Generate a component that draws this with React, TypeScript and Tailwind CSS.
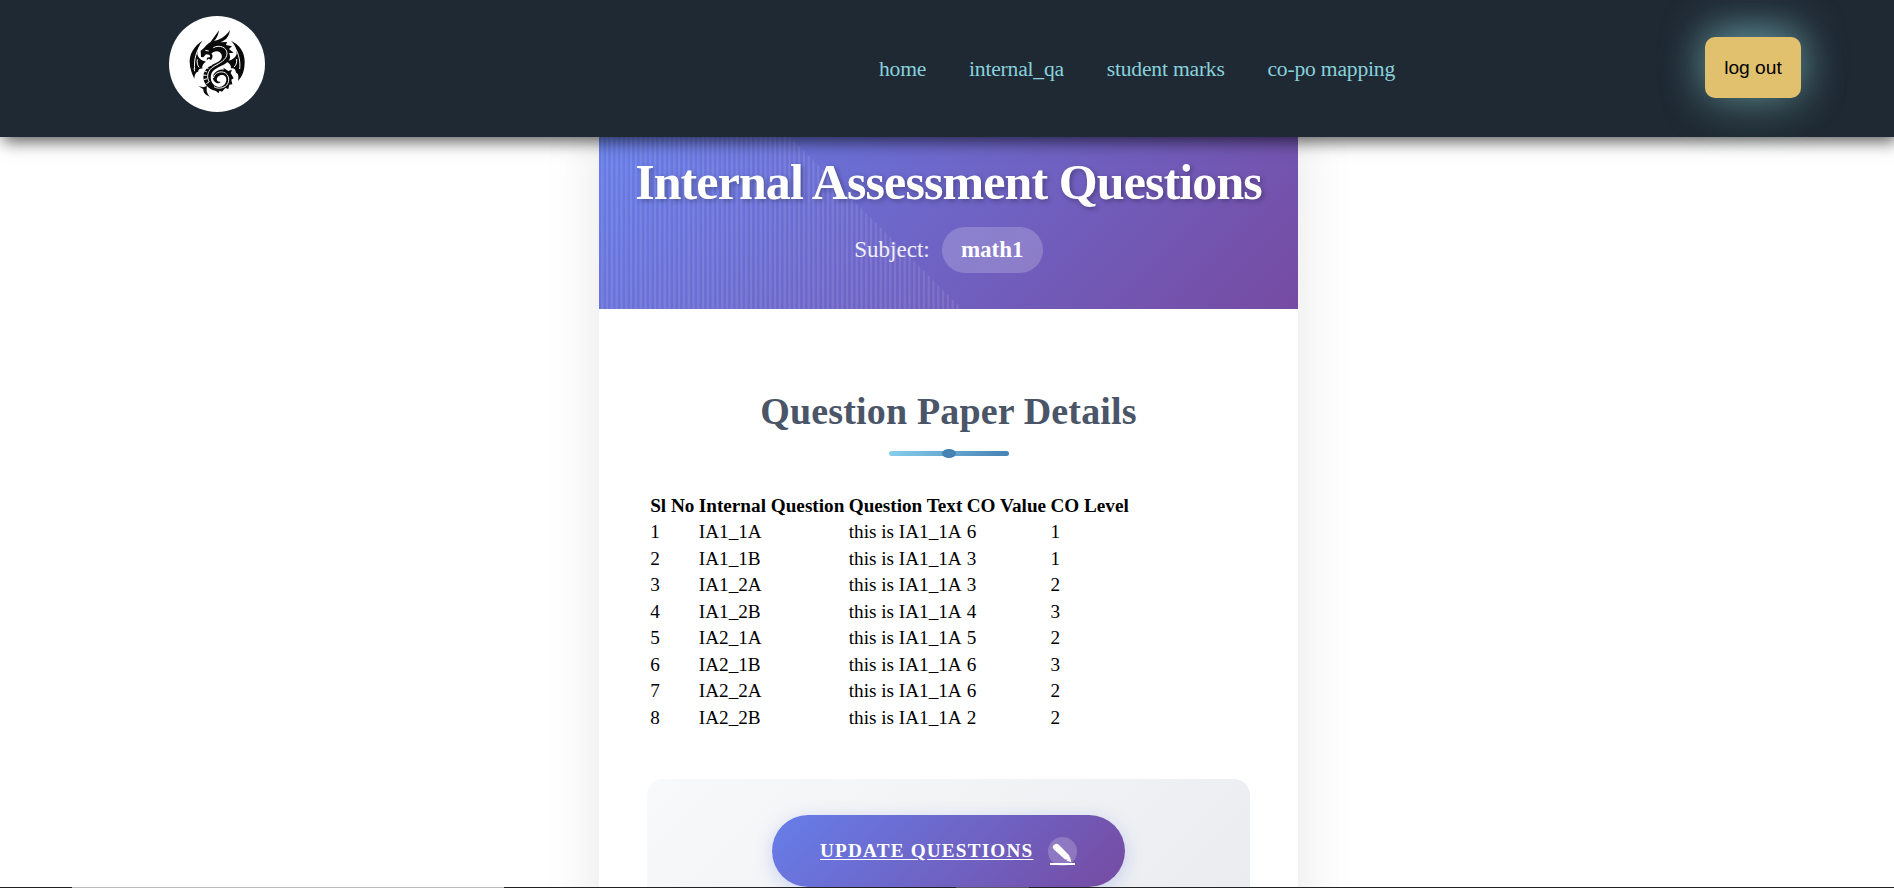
const rows = [
  ["IA1_1A", 6, 1],
  ["IA1_1B", 3, 1],
  ["IA1_2A", 3, 2],
  ["IA1_2B", 4, 3],
  ["IA2_1A", 5, 2],
  ["IA2_1B", 6, 3],
  ["IA2_2A", 6, 2],
  ["IA2_2B", 2, 2],
];

function DragonLogo() {
  return (
    <svg viewBox="0 0 420 450" className="h-[150px] w-[140px]" fill="#0a0a0a">
      <path d="M158 122C132 137 118 163 119 187C120 207 126 222 133 236C134 222 138 216 144 215C146 207 150 205 157 206C155 196 160 190 168 185C152 181 145 174 142 163C141 148 148 134 158 122Z" />
      <path d="M243 122C268 134 284 156 284 184C284 211 278 229 264 243C267 226 264 219 258 218C257 207 251 203 243 205C244 196 238 189 228 184C246 181 256 174 260 162C261 147 254 133 243 122Z" />
      <path d="M153 171L152 152C164 145 166 136 181 127L207 91C204 108 200 115 192 123C207 120 224 113 240 90C237 112 226 121 211 127L231 126L228 135L246 139L237 147L251 158L237 160C244 173 239 184 225 192C210 200 188 208 184 222C179 238 186 252 197 258C211 266 228 256 229 240C230 224 213 221 204 230C197 237 201 247 212 245C207 253 195 250 190 240C184 222 203 205 222 209L220 203L235 213L246 209L242 219L251 235L244 239L247 253L238 254L235 267L226 264L216 275L209 272L205 280L198 273C176 269 160 251 160 231C160 202 187 196 207 184C219 176 218 161 207 155C199 151 189 155 184 161C190 165 188 174 183 180L176 176L170 181L171 173L181 171L178 164L168 163L160 172Z" />
      <path d="M145 258L159 262L171 258C169 269 169 280 180 290C166 286 159 276 160 268C154 263 150 262 145 258Z" />
      <g fill="none" stroke="#fff" strokeWidth="3">
        <path d="M151 137C134 163 132 188 134 207" />
        <path d="M142 178C140 190 143 196 147 202M132 205L134 214" />
        <path d="M251 137C269 163 271 188 269 207" />
        <path d="M260 177C261 190 257 197 252 201" />
        <path d="M190 143C208 133 231 142 231 160C231 180 207 190 192 199C171 211 169 232 178 246" />
        <path d="M190 234C194 218 212 211 226 219C240 229 239 250 226 259C215 266 201 266 192 260" />
        <path d="M189 182L193 189M177 189L184 198M167 198L175 207M160 211L171 216M159 225L170 226M161 239L172 236M169 251L177 246" />
        <path d="M166 151L176 153" />
      </g>
    </svg>
  );
}

function Pencil() {
  return (
    <svg viewBox="0 0 25 29" className="h-[29px] w-[25px]" fill="#fff">
      <path d="M3.6 8.2Q5.9 5.4 8.8 7.8L19.2 18.2Q20 20.2 18.2 21.8Q16.6 23.1 14.8 22.2L4 12.4Q1.6 10.2 3.6 8.2Z" />
      <path d="M20 19.6L21.3 25.2L16.2 23.4Z" />
      <path d="M0 26H25V28H0Z" />
    </svg>
  );
}

export default function App() {
  return (
    <div className="flex h-[888px] flex-col overflow-hidden bg-white font-['Liberation_Serif',serif] text-black">
      <header className="relative z-10 flex h-[137px] shrink-0 items-start bg-[#1f2933] shadow-[3px_5px_15px_rgba(0,0,0,0.62)]">
        <div className="ml-[169px] mt-4 flex size-24 shrink-0 items-start justify-center rounded-full bg-white">
          <div className="-mt-4 h-[150px] w-[140px] shrink-0 translate-x-[3px]">
            <DragonLogo />
          </div>
        </div>
        <nav className="ml-[614px] mt-[57px] flex gap-[42.8px] whitespace-nowrap text-[21.6px] leading-6 tracking-[-0.2px] text-[#88d1dc]">
          <a>home</a>
          <a>internal_qa</a>
          <a>student marks</a>
          <a>co-po mapping</a>
        </nav>
        <button className="ml-auto mr-[93px] mt-[37px] h-[61px] w-24 rounded-[10px] bg-[#e1c16e] font-['Liberation_Sans',sans-serif] text-[19.2px] shadow-[0_-8px_42px_rgba(136,209,220,0.6),0_12px_50px_rgba(136,209,180,0.2)]">
          <span className="relative top-px">log out</span>
        </button>
      </header>

      <main className="-mt-[18px] ml-[599px] h-[900px] w-[699px] shrink-0 bg-white shadow-[0_0_54px_rgba(0,0,0,0.1)]">
        <section className="relative flex h-[190px] flex-col items-center bg-[linear-gradient(135deg,#667eea_0%,#764ba2_100%)] pt-9">
          <div className="absolute inset-0 bg-[repeating-linear-gradient(90deg,transparent_0px,transparent_1.7px,rgba(255,255,255,0.1)_2.7px,rgba(255,255,255,0.1)_4px,transparent_4.8px)] [clip-path:polygon(0_0,173px_0,363px_190px,0_190px)]" />
          <h1 className="relative -top-px whitespace-nowrap text-[50px] font-bold leading-[56px] tracking-[-0.9px] text-white [text-shadow:2px_2px_5px_rgba(0,0,0,0.3)]">
            Internal Assessment Questions
          </h1>
          <div className="relative mt-4 flex items-center gap-3 text-[23px]">
            <span className="text-white/90">Subject:</span>
            <span className="flex h-[46px] w-[101px] items-center justify-center rounded-full bg-white/20 font-bold text-white">math1</span>
          </div>
        </section>

        <section className="flex flex-col px-12 pt-20">
          <h2 className="text-center text-[38px] font-bold leading-[44px] tracking-[0.16px] text-[#4a5568]">Question Paper Details</h2>
          <div className="mt-[18px] flex h-[5px] w-[120px] items-center justify-center self-center rounded-sm bg-[linear-gradient(90deg,#87ceeb,#4682b4)]">
            <span className="h-[9px] w-[14px] shrink-0 rounded-[50%] bg-[#4682b4]" />
          </div>
          <table className="mt-9 w-max border-separate border-spacing-[2.4px] text-left text-[19.2px] leading-[24.45px]">
            <thead>
              <tr className="whitespace-nowrap">
                <th className="px-[1.2px]">Sl No</th>
                <th className="px-[1.2px]">Internal Question</th>
                <th className="px-[1.2px]">Question Text</th>
                <th className="px-[1.2px]">CO Value</th>
                <th className="px-[1.2px]">CO Level</th>
              </tr>
            </thead>
            <tbody>
              {rows.map(([name, value, level], i) => (
                <tr key={name} className="whitespace-nowrap">
                  <td className="px-[1.2px]">{i + 1}</td>
                  <td className="px-[1.2px]">{name}</td>
                  <td className="px-[1.2px]">this is IA1_1A</td>
                  <td className="px-[1.2px]">{value}</td>
                  <td className="px-[1.2px]">{level}</td>
                </tr>
              ))}
            </tbody>
          </table>
          <div className="mt-[47px] flex h-[160px] w-[603px] justify-center rounded-2xl bg-[linear-gradient(135deg,#f8f9fa_0%,#e9ecef_100%)] pt-9">
            <a className="flex h-[72px] w-[353px] items-center justify-between rounded-full bg-[linear-gradient(135deg,#667eea_0%,#764ba2_100%)] px-12 text-[19.2px] font-bold tracking-[1.2px] text-white shadow-[0_4px_18px_rgba(102,126,234,0.3)]">
              <span className="whitespace-nowrap underline underline-offset-2">UPDATE QUESTIONS</span>
              <span className="flex size-[29px] items-center justify-center rounded-full bg-white/20">
                <Pencil />
              </span>
            </a>
          </div>
        </section>
      </main>
      <div className="absolute inset-x-0 top-[887px] z-20 h-px bg-[linear-gradient(90deg,#222_72px,#bbb_72px,#bbb_504px,#222_504px,#222_956px,#5a5560_956px,#5a5560_1029px,#222_1029px)]" />
    </div>
  );
}
